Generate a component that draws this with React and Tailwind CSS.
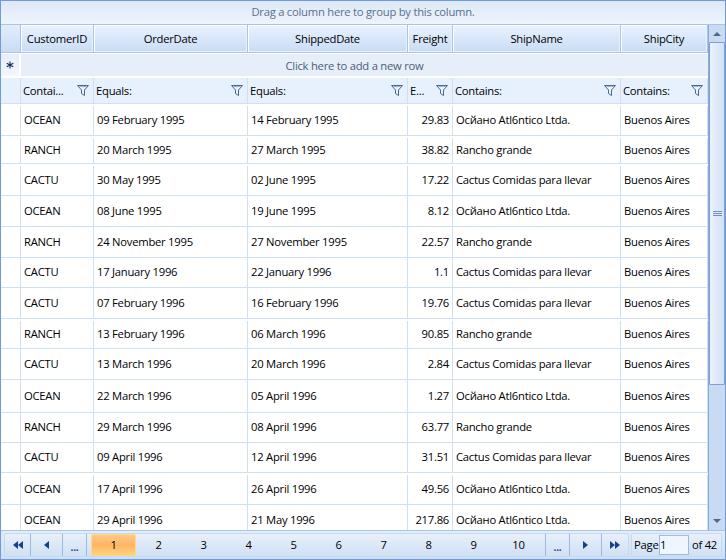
import React from "react";

const cols = ["w-[73px]", "w-[154px]", "w-[160px]", "w-[45px]", "w-[168px]", "w-[87px]"];
const titles = ["CustomerID", "OrderDate", "ShippedDate", "Freight", "ShipName", "ShipCity"];
const filters = ["Contai...", "Equals:", "Equals:", "E...", "Contains:", "Contains:"];

const OCEAN = "Ос\u0439ано Atl6ntico Ltda.";
const RANCH = "Rancho grande";
const CACTU = "Cactus Comidas para llevar";

const rows = [
  ["h-[32px] pt-[2px]", "OCEAN", "09 February 1995", "14 February 1995", "29.83", OCEAN],
  ["h-[28px] pt-[2px]", "RANCH", "20 March 1995", "27 March 1995", "38.82", RANCH],
  ["h-[32px] pt-[2px]", "CACTU", "30 May 1995", "02 June 1995", "17.22", CACTU],
  ["h-[31px]", "OCEAN", "08 June 1995", "19 June 1995", "8.12", OCEAN],
  ["h-[31px]", "RANCH", "24 November 1995", "27 November 1995", "22.57", RANCH],
  ["h-[30px]", "CACTU", "17 January 1996", "22 January 1996", "1.1", CACTU],
  ["h-[31px]", "CACTU", "07 February 1996", "16 February 1996", "19.76", CACTU],
  ["h-[30px] pt-[2px]", "RANCH", "13 February 1996", "06 March 1996", "90.85", RANCH],
  ["h-[31px]", "CACTU", "13 March 1996", "20 March 1996", "2.84", CACTU],
  ["h-[33px]", "OCEAN", "22 March 1996", "05 April 1996", "1.27", OCEAN],
  ["h-[30px]", "RANCH", "29 March 1996", "08 April 1996", "63.77", RANCH],
  ["h-[30px]", "CACTU", "09 April 1996", "12 April 1996", "31.51", CACTU],
  ["h-[32px] pt-[2px]", "OCEAN", "17 April 1996", "26 April 1996", "49.56", OCEAN],
  ["h-[31px]", "OCEAN", "29 April 1996", "21 May 1996", "217.86", OCEAN],
];

const Funnel = () => (
  <svg width="12" height="11" viewBox="0 0 12 11" className="shrink-0">
    <path d="M0.5 0.5H11.5L7.5 5V10.5L4.5 8.5V5Z" fill="#eaf2fb" stroke="#47688f" strokeWidth="1" />
    <path d="M2.5 1.5H9.5" stroke="#9db7d6" strokeWidth="1" />
  </svg>
);

const Tri = ({ flip, double }) => (
  <svg width={double ? 10 : 5} height="8" viewBox={double ? "0 0 10 8" : "0 0 5 8"} className={flip ? "rotate-180" : ""}>
    <path d="M0 4L5 0V8Z" fill="#15428b" />
    {double && <path d="M5 4L10 0V8Z" fill="#15428b" />}
  </svg>
);

const PagerBtn = ({ width, children }) => (
  <div className={`${width} h-full flex items-center justify-center`}>{children}</div>
);

const Dots = () => <span className="text-[#15428b] font-bold text-[10px] leading-none mt-1">...</span>;

const Cell = ({ width, right, children }) => (
  <div className={`${width} shrink-0 h-full border-r border-[#cfdff5] flex items-center overflow-hidden whitespace-nowrap ${right ? "justify-end pr-[3px]" : "pl-[3px]"}`}>
    {children}
  </div>
);

const App = () => {
  return (
    <div className="w-[726px] h-[560px] flex flex-col overflow-hidden border border-[#6f9bd6] bg-white text-[11.25px] tracking-[-0.25px] text-black font-['Open_Sans','Liberation_Sans',sans-serif]">
      {/* group panel */}
      <div className="h-[24px] shrink-0 flex items-center justify-center bg-gradient-to-b from-[#dde8f6] to-[#eef4fd] border-b border-[#a9c4e8] text-[#5b6f8c]">
        Drag a column here to group by this column.
      </div>

      <div className="flex-1 flex min-h-0">
        {/* grid */}
        <div className="w-[707px] shrink-0 flex flex-col overflow-hidden">
          <div className="h-[28px] shrink-0 flex border-b border-[#a9c4e8]">
            <div className="w-[20px] shrink-0 border-r border-[#a9c4e8] bg-gradient-to-b from-[#e3edfb] to-[#c9dcf6]" />
            {titles.map((t, i) => (
              <div key={t} className={`${cols[i]} shrink-0 flex items-center justify-center pt-[2px] border-r border-[#a9c4e8] bg-gradient-to-b from-[#eaf2fd] to-[#c9dcf6] shadow-[inset_1px_1px_0_#ffffff,inset_-1px_-1px_0_#e9f1fc]`}>
                {t}
              </div>
            ))}
          </div>

          <div className="h-[24px] mt-[1px] shrink-0 flex border-b-2 border-white bg-[#e6eef9] text-[#4c5f7a]">
            <div className="w-[20px] shrink-0 flex items-center justify-center border-r-2 border-white bg-gradient-to-b from-[#e6eef9] to-[#f4f7fc]">
              <svg width="8" height="8" viewBox="0 0 9 9">
                <path d="M4.5 0.5V8.5M0.8 2.4L8.2 6.6M8.2 2.4L0.8 6.6" stroke="#15305c" strokeWidth="1.3" />
              </svg>
            </div>
            <div className="flex-1 flex items-center justify-center pt-[2px] pr-[20px]">Click here to add a new row</div>
          </div>

          <div className="h-[26px] shrink-0 flex border-b border-[#cfdff5] bg-[#e7f1fd]">
            <div className="w-[20px] shrink-0 border-r border-[#cfdff5]" />
            {filters.map((f, i) => (
              <div key={i} className={`${cols[i]} shrink-0 flex items-center justify-between pl-[2px] pr-[4px] border-r border-[#cfdff5] overflow-hidden whitespace-nowrap`}>
                <span className="mt-[2px]">{f}</span>
                <Funnel />
              </div>
            ))}
          </div>

          {rows.map(([h, id, ordered, shipped, freight, name], r) => (
            <div key={r} className={`${h} shrink-0 flex border-b border-[#cfdff5]`}>
              <div className="w-[20px] shrink-0 border-r border-[#cfdff5]" />
              <Cell width={cols[0]}>{id}</Cell>
              <Cell width={cols[1]}>{ordered}</Cell>
              <Cell width={cols[2]}>{shipped}</Cell>
              <Cell width={cols[3]} right>{freight}</Cell>
              <Cell width={cols[4]}>{name}</Cell>
              <Cell width={cols[5]}>Buenos Aires</Cell>
            </div>
          ))}
        </div>

        {/* scrollbar */}
        <div className="w-[17px] shrink-0 flex flex-col bg-[#c9dbf2] border-l border-[#8aabd8]">
          <div className="h-[17px] shrink-0 flex items-center justify-center">
            <svg width="8" height="4" viewBox="0 0 8 4"><path d="M0 4L4 0L8 4Z" fill="#50688a" /></svg>
          </div>
          <div className="h-[343px] shrink-0 flex items-center justify-center rounded-[1px] border border-[#7f9fd0] bg-gradient-to-r from-[#eaf2fd] to-[#d3e2f7]">
            <div className="w-[9px] h-[5px] border-y border-[#6f8fc0] flex items-center">
              <div className="w-full h-px bg-[#6f8fc0]" />
            </div>
          </div>
          <div className="flex-1" />
          <div className="h-[17px] mb-[1px] shrink-0 flex items-center justify-center">
            <svg width="8" height="4" viewBox="0 0 8 4"><path d="M0 0L8 0L4 4Z" fill="#50688a" /></svg>
          </div>
        </div>
      </div>

      {/* pager */}
      <div className="h-[29px] shrink-0 flex items-center pl-[3px] pr-[3px] border-t border-[#a9c4e8] bg-gradient-to-b from-[#e3edfa] to-[#cedff4]">
        <div className="h-[24px] flex items-center w-[625px] shrink-0 border border-[#c7d9f0] rounded-[2px] bg-gradient-to-b from-[#e8f0fb] to-[#d0e0f5]">
          <PagerBtn width="w-[26px] border-r border-[#9cb9e0]"><Tri double /></PagerBtn>
          <PagerBtn width="w-[32px] border-r border-[#9cb9e0]"><Tri /></PagerBtn>
          <PagerBtn width="w-[24px] border-r border-[#9cb9e0]"><Dots /></PagerBtn>
          <div className="w-[458px] shrink-0 h-full grid grid-cols-10 px-[4px]">
            {[1, 2, 3, 4, 5, 6, 7, 8, 9, 10].map((n) => (
              <div
                key={n}
                className={n === 1
                  ? "flex items-center justify-center rounded-[2px] border border-[#ffd98a] bg-gradient-to-b from-[#ffc98a] via-[#ffb562] to-[#ffd27c]"
                  : "flex items-center justify-center"}
              >
                {n}
              </div>
            ))}
          </div>
          <PagerBtn width="w-[25px] border-x border-[#9cb9e0]"><Dots /></PagerBtn>
          <PagerBtn width="w-[32px] border-r border-[#9cb9e0]"><Tri flip /></PagerBtn>
          <PagerBtn width="flex-1"><Tri flip double /></PagerBtn>
        </div>
        <div className="ml-[2px] h-[24px] flex-1 flex items-center pl-[2px] border border-[#c7d9f0] rounded-[2px] whitespace-nowrap bg-gradient-to-b from-[#e8f0fb] to-[#d0e0f5]">
          <span>Page</span>
          <div className="ml-auto w-[30px] h-[20px] flex items-center border border-[#9cb9e0] bg-[#f0f6fe]">1</div>
          <span className="ml-[3px] mr-[4px]">of 42</span>
        </div>
      </div>
    </div>
  );
};

export default App;
